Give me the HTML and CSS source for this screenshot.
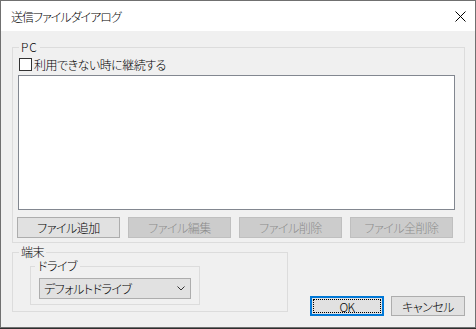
FILE: index.html
```html
<!DOCTYPE html>
<html lang="ja">

<head>
    <meta charset="UTF-8">
    <meta name="viewport" content="width=device-width, initial-scale=1.0">
    <title>送信ファイルダイアログ</title>
    <link rel="stylesheet" href="styles.css">
</head>

<body>
    <div class="dialog">
        <div class="titlebar">
            <span class="title">送信ファイルダイアログ</span>
            <svg class="close" width="11" height="11" viewBox="0 0 11 11">
                <path d="M0.5 0.5L10.5 10.5M10.5 0.5L0.5 10.5" stroke="#000" stroke-width="1" fill="none" />
            </svg>
        </div>
        <div class="content">
            <fieldset class="group pc">
                <legend>PC</legend>
                <label class="check"><span class="box"></span>利用できない時に継続する</label>
                <div class="listbox"></div>
                <div class="file-buttons">
                    <button class="btn">ファイル追加</button>
                    <button class="btn" disabled>ファイル編集</button>
                    <button class="btn" disabled>ファイル削除</button>
                    <button class="btn" disabled>ファイル全削除</button>
                </div>
            </fieldset>
            <div class="bottom">
                <fieldset class="group terminal">
                    <legend>端末</legend>
                    <fieldset class="group drive">
                        <legend>ドライブ</legend>
                        <div class="combo">
                            <span>デフォルトドライブ</span>
                            <svg class="chevron" width="8" height="5" viewBox="0 0 8 5">
                                <path d="M0.5 0.5L4 4L7.5 0.5" stroke="#333" stroke-width="1" fill="none" />
                            </svg>
                        </div>
                    </fieldset>
                </fieldset>
                <div class="actions">
                    <button class="btn default">OK</button>
                    <button class="btn">キャンセル</button>
                </div>
            </div>
        </div>
    </div>
</body>

</html>
```

FILE: styles.css
```css
* {
    box-sizing: border-box;
}

body {
    margin: 0;
    background-color: #2e2e2e;
    font-family: "Noto Sans CJK JP", "Noto Sans", sans-serif;
    font-size: 12px;
    font-weight: 300;
    font-feature-settings: "palt";
    letter-spacing: -0.5px;
    color: #000;
}

.dialog {
    width: 476px;
    height: 328px;
    border: 1px solid #707070;
    background-color: #f0f0f0;
}

.titlebar {
    height: 30px;
    background-color: #fff;
    display: flex;
    align-items: center;
    padding: 1px 9px 0 10px;
}

.title {
    letter-spacing: -1px;
}

.close {
    margin-left: auto;
}

.content {
    padding: 0 10px 0 11px;
}

/* group boxes */
.group {
    margin: 0;
    min-width: 0;
    border: 1px solid #dcdcdc;
}

.group legend {
    line-height: 16px;
    padding: 0 2px;
}

.pc {
    width: 453px;
    margin-top: 8px;
    padding: 0 9px 4px 5px;
}

.pc legend {
    margin-left: 1px;
    letter-spacing: 1px;
}

.check {
    display: flex;
    align-items: center;
    height: 18px;
}

.box {
    width: 13px;
    height: 13px;
    border: 1px solid #333;
    background-color: #fff;
    margin-left: 1px;
    margin-right: 2px;
}

.listbox {
    width: 437px;
    height: 135px;
    margin-top: 2px;
    background-color: #fff;
    border: 1px solid #828790;
}

.file-buttons {
    display: flex;
    gap: 8px;
    margin-top: 7px;
    margin-left: -1px;
}

.btn {
    width: 103px;
    height: 21px;
    padding: 0;
    font-family: inherit;
    font-size: 12px;
    font-weight: 300;
    font-feature-settings: "palt";
    letter-spacing: -0.5px;
    color: #000;
    background-color: #e1e1e1;
    border: 1px solid #adadad;
}

.btn:disabled {
    background-color: #cccccc;
    border-color: #bfbfbf;
    color: #8c8c8c;
}

.bottom {
    display: flex;
    align-items: flex-start;
    margin-top: 1px;
}

.terminal {
    width: 276px;
    padding: 0 6px 6px 6px;
}

.drive {
    width: 170px;
    margin-top: -2px;
    margin-left: 11px;
    padding: 0 4px 5px 4px;
}

.drive legend {
    padding: 0 3px;
}

.combo {
    width: 152px;
    height: 21px;
    margin-top: 4px;
    margin-left: 4px;
    padding-left: 4px;
    display: flex;
    align-items: center;
    background-color: #e1e1e1;
    border: 1px solid #adadad;
}

.chevron {
    margin-left: auto;
    margin-right: 5px;
}

.actions {
    display: flex;
    gap: 7px;
    margin-left: auto;
    margin-top: 52px;
}

.actions .btn {
    width: 74px;
    height: 20px;
}

.btn.default {
    border-color: #0078d7;
    box-shadow: inset 0 0 0 1px #0078d7;
    outline: 1px dotted #000;
    outline-offset: -4px;
}
```
